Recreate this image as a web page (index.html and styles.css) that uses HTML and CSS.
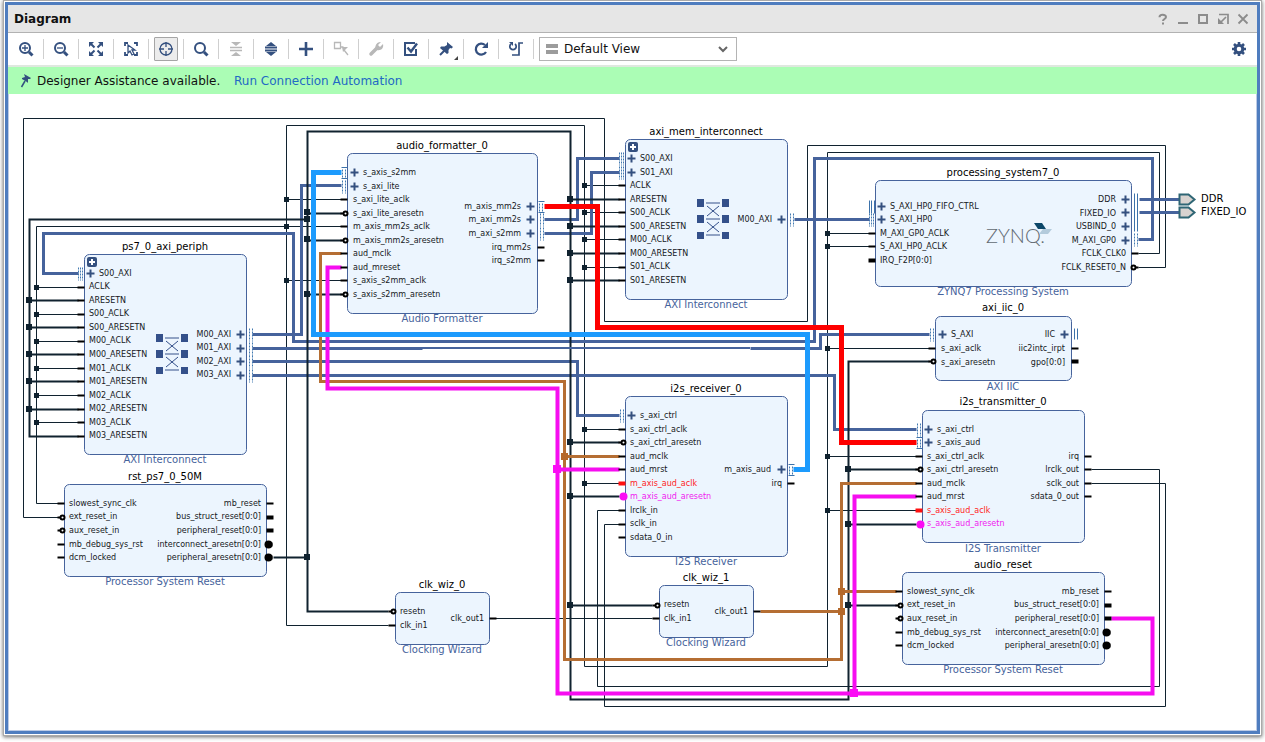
FILE: index.html
```html
<!DOCTYPE html>
<html lang="en">
<head>
<meta charset="utf-8">
<title>Diagram</title>
<link rel="stylesheet" href="styles.css">
</head>
<body>
<div class="window">
<div class="panel">
  <header class="titlebar">
    <h1>Diagram</h1>
    <div class="controls">
      <button type="button" aria-label="Help"><svg viewBox="0 0 12 12"><path d="M2.5 4.2C2.5 1 9 1 9 4c0 2-3 2-3 4" stroke-width="2"/><path d="M5 9.5h2v2H5z" class="solid"/></svg></button>
      <button type="button" aria-label="Minimize"><svg viewBox="0 0 12 12"><path d="M1 10h10" stroke-width="2"/></svg></button>
      <button type="button" aria-label="Maximize"><svg viewBox="0 0 12 12"><path d="M2 2h8v8H2z" stroke-width="2"/></svg></button>
      <button type="button" aria-label="Float"><svg viewBox="0 0 12 12"><path d="M2 1.5h9V11M9 4 4 9" stroke-width="1.7"/><path d="M1 5v6h6z" class="solid"/></svg></button>
      <button type="button" aria-label="Close"><svg viewBox="0 0 12 12"><path d="m1.500 1.500 9 9m0-9-9 9" stroke-width="1.800"/></svg></button>
    </div>
  </header>

  <div class="toolbar" role="toolbar" aria-label="Diagram tools">
    <button type="button" aria-label="Zoom in"><svg viewBox="0 0 16 16"><circle cx="7" cy="7" r="5"/><path d="M4 7h6M7 4v6" class="fine"/><path d="m11 11 3.500 3.500" stroke-width="3"/></svg></button>
    <button type="button" aria-label="Zoom out"><svg viewBox="0 0 16 16"><circle cx="7" cy="7" r="5"/><path d="M4 7h6" class="fine"/><path d="m11 11 3.500 3.500" stroke-width="3"/></svg></button>
    <button type="button" aria-label="Zoom fit"><svg viewBox="0 0 16 16"><path d="m3 3 3.500 3.500M13 3 9.500 6.500M3 13l3.500-3.500M13 13 9.500 9.500"/><path class="solid" d="M1 1h5L1 6zM15 1v5l-5-5zM1 15v-5l5 5zM15 15h-5l5-5z"/></svg></button>
    <button type="button" aria-label="Zoom to selection"><svg viewBox="0 0 16 16"><path d="M2 5V2h3M11 2h3v3M14 11v3h-3M5 14H2v-3" stroke-width="1.800"/><path class="fine" d="M5 4v8l2-2 2 4 2-1-2-4h3z"/></svg></button>
    <button type="button" aria-label="Auto fit selection" aria-pressed="true" class="active"><svg viewBox="0 0 16 16"><circle cx="8" cy="8" r="6" class="fine"/><path d="M8 1v5M8 10v5M1 8h5M10 8h5" class="fine"/></svg></button>
    <button type="button" aria-label="Search"><svg viewBox="0 0 16 16"><circle cx="7" cy="7" r="5"/><path d="m11 11 3.500 3.500" stroke-width="3"/></svg></button>
    <button type="button" aria-label="Collapse all" disabled><svg viewBox="0 0 16 16"><path d="M2 6.500h12M2 9.500h12" stroke-width="1.600"/><path class="solid" d="M3 1h10L8 5zM3 15h10l-5-4z"/></svg></button>
    <button type="button" aria-label="Expand all"><svg viewBox="0 0 16 16"><path d="M2 6.500h12M2 9.500h12" stroke-width="1.900"/><path class="solid" d="M3 5h10L8 1zM3 11h10l-5 4z"/></svg></button>
    <button type="button" aria-label="Add IP"><svg viewBox="0 0 16 16"><path d="M8 1v14M1 8h14" stroke-width="2.600"/></svg></button>
    <button type="button" aria-label="Make connection" disabled><svg viewBox="0 0 16 16"><path d="M1.500 1.500h6v6h-6zM7.500 6h3M11 9l4 5" class="fine"/><path class="solid" d="M9 6h6l-5 5z"/></svg></button>
    <button type="button" aria-label="Customize block" disabled><svg viewBox="0 0 16 16"><path d="m3 13 6-6" stroke-width="3.500" stroke-linecap="round"/><path class="solid" d="M13 1 10 4l2 2 3-3c1 4-2 7-6 6C6 8 7 1 13 1z"/></svg></button>
    <button type="button" aria-label="Validate design"><svg viewBox="0 0 16 16"><path d="M12 2H2v12h11V8"/><path d="m4.500 6.500 3.500 4 6-8" stroke-width="2.400"/></svg></button>
    <button type="button" aria-label="Pin" class="has-menu"><svg viewBox="0 0 16 16"><path d="M7 9 2 14"/><path class="solid" d="m9 1 6 5-1.500 1.500-1.500-.5-1.500 2v3L9 13 2 7l1-1.500h3.500L9 4z"/></svg></button>
    <button type="button" aria-label="Regenerate layout"><svg viewBox="0 0 16 16"><path d="M13 11a5.500 5.500 0 1 1-1-7" stroke-width="2.300"/><path class="solid" d="M15 1v6H9z"/></svg></button>
    <button type="button" aria-label="Optimize routing"><svg viewBox="0 0 16 16"><path d="M3 3a3.200 3.200 0 1 0 4 0M15 2h-4v12H4" stroke-width="1.700"/><path class="solid" d="M1 1h4v4z"/></svg></button>
    <label class="view">
      <svg class="view-bars" viewBox="0 0 12 10"><path d="M0 0h12v4H0zM0 6h12v4H0z"/></svg>
      <select aria-label="View"><option>Default View</option></select>
      <svg class="view-arrow" viewBox="0 0 10 8"><path d="m1 2 4 4 4-4"/></svg>
    </label>
    <button type="button" aria-label="Settings" class="settings"><svg viewBox="0 0 16 16"><circle cx="8" cy="8" r="3.800" stroke-width="3"/><path d="M8 1v2.500M8 12.500V15M1 8h2.500M12.500 8H15M3 3l2 2M11 11l2 2M3 13l2-2M11 5l2-2" stroke-width="2.600"/></svg></button>
  </div>

  <div class="banner">
    <svg class="banner-pin" viewBox="0 0 12 16"><path class="solid" d="m4 1 7 4-1 1-2 0v4L7 9 2 6V5l3-1z"/><path d="M5 8 1.500 14" stroke-width="1.500"/></svg>
    <span>Designer Assistance available.</span>
    <a href="#automation">Run Connection Automation</a>
  </div>

  <main class="canvas">
    <svg class="diagram" role="img" aria-label="Block design">
      <defs>
        <g id="plus"><path class="plus" d="M-4 0H4M0-4V4"/></g>
        <g id="expand"><rect class="chip" width="10" height="10" rx="2"/><path class="chip-plus" d="M2 5h6M5 2v6"/></g>
        <g id="mm"><path class="mesh" d="M-6-6V7M-4-6V7M-2-6V7"/></g>
        <g id="mm2"><path class="mesh" d="M-5-6V7M-2-6V7"/></g>
        <g id="st"><path class="rail" d="M-6-5H0M-6 6H0"/><path class="mesh" d="M-5-3V5M-2-3V5"/></g>
        <g id="bars"><path class="rail" d="M-5-6V7M-3-6V7M0-6V7"/></g>
        <g id="pin"><path class="stub" d="M-7 0H0"/></g>
        <g id="inv"><path class="stub" d="M-7 0H-4"/><circle class="ring" cx="-2" r="2"/></g>
        <g id="bus"><path class="bus" d="M0 0H7"/></g>
        <g id="busn"><path class="bus" d="M0 0H6"/><circle class="dot" cx="2" r="4"/></g>
        <g id="xbar"><path class="cell" d="M0 0h7v8H0zM25 0h7v8h-7zM0 16h7v8H0zM25 16h7v8h-7zM0 33h7v7H0zM25 33h7v7h-7z"/><path class="cross" d="M9 4h14M9 20h14M9 36h14M10 7l12 10M22 7 10 17M10 23l12 10M22 23 10 33"/></g>
        <g id="ext"><path class="ext" d="M0-5H9L15 0 9 5H0z"/></g>
      </defs>
      <g transform="translate(-9 -94)">
      <g transform="translate(.5 .5)">
        <g class="wire clk">
          <path d="M58 517H23V118H604V321H807V145H1165V267H1138"/>
          <path d="M58 503H36V226H341M388 625H286V125H584V666H827V152H1159V253H1138"/>
          <path d="M286 199H341M286 280H341M36 287H78M36 314H78M36 341H78M36 368H78M36 395H78M36 422H78"/>
          <path d="M584 185H619M584 212H619M584 239H619M584 267H619M584 429H619M584 483H619"/>
          <path d="M827 233H869M827 246H869M827 348H929M827 456H916M827 510H916"/>
          <path d="M619 510H597V686H1159V469H1091M619 524H604V706H1165V483H1091M495 618H652"/>
        </g>
        <g class="wire axi">
          <path d="M78 273H43V233H293V341H814V158H1152V239H1138"/>
          <path d="M252 334H301V185H341M252 348H422M750 348H820V334H929"/>
          <path d="M252 361H577V415H619M252 375H834V429H916"/>
          <path d="M544 219H577V158H619M544 233H591V172H619M794 219H869M1139 199H1180M1139 212H1180"/>
        </g>
        <g class="wire rst">
          <path d="M388 611H307V131H570V699H848V361H929M273 557H307M307 219H29V436H78"/>
          <path d="M29 300H78M29 327H78M29 354H78M29 381H78M29 409H78M307 213H341M307 240H341M307 294H341"/>
          <path d="M570 199H619M570 226H619M570 253H619M570 280H619M570 442H619M570 496H619M570 605H652M848 469H916M848 524H916M848 605H896"/>
        </g>
        <g class="wire mclk"><path d="M341 253H320V381H564V659H841V483H916M564 456H619M760 611H841M841 591H896"/></g>
        <g class="wire mrst"><path d="M341 267H327V388H557V693H1152V618H1111M557 469H619M854 693V496H916"/></g>
        <g class="wire mm2s"><path d="M544 206H597V327H841V442H916"/></g>
        <g class="wire s2mm"><path d="M341 172H313V334H807V469H793"/></g>
      </g>
      <path class="axi-thin" d="M422 348H750"/>

      <g class="joint">
        <path d="M284 197h5v5h-5zM284 224h5v5h-5zM284 278h5v5h-5zM34 285h5v5h-5zM34 312h5v5h-5zM34 339h5v5h-5zM34 366h5v5h-5zM34 393h5v5h-5zM34 420h5v5h-5z"/>
        <path d="M582 183h5v5h-5zM582 210h5v5h-5zM582 237h5v5h-5zM582 265h5v5h-5zM582 427h5v5h-5zM582 481h5v5h-5z"/>
        <path d="M825 231h5v5h-5zM825 244h5v5h-5zM825 346h5v5h-5zM825 454h5v5h-5zM825 508h5v5h-5z"/>
        <path d="M304 209h6v6h-6zM304 216h6v6h-6zM304 236h6v6h-6zM304 291h6v6h-6zM304 554h6v6h-6zM26 297h6v6h-6zM26 324h6v6h-6zM26 351h6v6h-6zM26 378h6v6h-6zM26 406h6v6h-6z"/>
        <path d="M567 196h6v6h-6zM567 223h6v6h-6zM567 250h6v6h-6zM567 277h6v6h-6zM567 439h6v6h-6zM567 493h6v6h-6zM567 602h6v6h-6zM845 466h6v6h-6zM845 521h6v6h-6zM845 602h6v6h-6z"/>
      </g>
      <path class="joint-mclk" d="M561 453h7v7h-7zM838 588h7v7h-7zM838 608h7v7h-7z"/>
      <path class="joint-mrst" d="M553 465h8v8h-8zM850 689h8v8h-8z"/>

      <g transform="translate(.5 .5)">
        <g class="block">
          <rect x="84" y="254" width="162" height="200" rx="5"/>
          <rect x="64" y="484" width="202" height="92" rx="5"/>
          <rect x="347" y="153" width="190" height="160" rx="5"/>
          <rect x="625" y="139" width="162" height="160" rx="5"/>
          <rect x="875" y="180" width="256" height="106" rx="5"/>
          <rect x="935" y="316" width="136" height="64" rx="5"/>
          <rect x="625" y="396" width="162" height="160" rx="5"/>
          <rect x="922" y="410" width="162" height="132" rx="5"/>
          <rect x="902" y="572" width="202" height="92" rx="5"/>
          <rect x="395" y="592" width="94" height="52" rx="5"/>
          <rect x="659" y="585" width="94" height="52" rx="5"/>
        </g>

        <!-- ps7_0_axi_periph pins -->
        <use href="#mm" x="84" y="273"/><use href="#plus" x="90" y="273"/>
        <use href="#pin" x="84" y="287"/><use href="#pin" x="84" y="300"/><use href="#pin" x="84" y="314"/><use href="#pin" x="84" y="327"/><use href="#pin" x="84" y="341"/><use href="#pin" x="84" y="354"/><use href="#pin" x="84" y="368"/><use href="#pin" x="84" y="381"/><use href="#pin" x="84" y="395"/><use href="#pin" x="84" y="409"/><use href="#pin" x="84" y="422"/><use href="#pin" x="84" y="436"/>
        <use href="#mm2" x="254" y="334"/><use href="#mm2" x="254" y="348"/><use href="#mm2" x="254" y="361"/><use href="#mm2" x="254" y="375"/>
        <use href="#plus" x="240" y="334"/><use href="#plus" x="240" y="348"/><use href="#plus" x="240" y="361"/><use href="#plus" x="240" y="375"/>
        <!-- rst_ps7_0_50M pins -->
        <use href="#pin" x="64" y="503"/><use href="#inv" x="64" y="517"/><use href="#inv" x="64" y="530"/><use href="#pin" x="64" y="544"/><use href="#pin" x="64" y="557"/>
        <use href="#pin" x="273" y="503"/><use href="#bus" x="266" y="517"/><use href="#bus" x="266" y="530"/><use href="#busn" x="266" y="544"/><use href="#busn" x="266" y="557"/>
        <!-- audio_formatter_0 pins -->
        <use href="#st" x="347" y="172"/><use href="#mm2" x="347" y="186"/><use href="#plus" x="354" y="172"/><use href="#plus" x="354" y="186"/>
        <use href="#pin" x="347" y="199"/><use href="#inv" x="347" y="213"/><use href="#pin" x="347" y="226"/><use href="#inv" x="347" y="240"/><use href="#pin" x="347" y="253"/><use href="#pin" x="347" y="267"/><use href="#pin" x="347" y="280"/><use href="#inv" x="347" y="294"/>
        <use href="#st" x="544" y="206"/><use href="#mm2" x="545" y="219"/><use href="#mm2" x="545" y="233"/><use href="#plus" x="530" y="206"/><use href="#plus" x="530" y="219"/><use href="#plus" x="530" y="233"/>
        <use href="#pin" x="544" y="247"/><use href="#pin" x="544" y="260"/>
        <!-- axi_mem_interconnect pins -->
        <use href="#mm" x="625" y="158"/><use href="#mm" x="625" y="172"/><use href="#plus" x="631" y="158"/><use href="#plus" x="631" y="172"/>
        <use href="#pin" x="625" y="185"/><use href="#pin" x="625" y="199"/><use href="#pin" x="625" y="212"/><use href="#pin" x="625" y="226"/><use href="#pin" x="625" y="239"/><use href="#pin" x="625" y="253"/><use href="#pin" x="625" y="267"/><use href="#pin" x="625" y="280"/>
        <use href="#plus" x="781" y="219"/><use href="#mm2" x="795" y="219"/>
        <!-- processing_system7_0 pins -->
        <use href="#bars" x="874" y="206"/><use href="#mm" x="875" y="219"/><use href="#plus" x="881" y="206"/><use href="#plus" x="881" y="219"/>
        <use href="#pin" x="875" y="233"/><use href="#pin" x="875" y="246"/><path class="bus" d="M868 260H875"/>
        <use href="#plus" x="1125" y="199"/><use href="#plus" x="1125" y="212"/><use href="#plus" x="1125" y="226"/><use href="#plus" x="1125" y="240"/>
        <path class="rail" d="M1134 193V231M1137 193V231"/><use href="#mm2" x="1139" y="239"/><use href="#pin" x="1138" y="253"/>
        <path class="stub" d="M1135 267H1138"/><circle class="ring" cx="1133" cy="267" r="2"/>
        <!-- axi_iic_0 pins -->
        <use href="#mm2" x="935" y="334"/><use href="#plus" x="942" y="334"/><use href="#pin" x="935" y="348"/><use href="#inv" x="935" y="361"/>
        <use href="#plus" x="1064" y="334"/><path class="rail" d="M1074 328V339M1077 328V339"/><use href="#pin" x="1078" y="348"/><use href="#bus" x="1071" y="361"/>
        <!-- i2s_receiver_0 pins -->
        <use href="#mm2" x="625" y="415"/><use href="#plus" x="631" y="415"/><use href="#pin" x="625" y="429"/><use href="#inv" x="625" y="442"/><use href="#pin" x="625" y="456"/><use href="#pin" x="625" y="469"/>
        <path class="stub-clk" d="M618 483H625"/><circle class="dot-rst" cx="623" cy="496" r="4"/><use href="#pin" x="625" y="510"/><use href="#pin" x="625" y="524"/><use href="#pin" x="625" y="537"/>
        <use href="#plus" x="781" y="469"/><use href="#st" x="794" y="469"/><use href="#pin" x="794" y="483"/>
        <!-- i2s_transmitter_0 pins -->
        <use href="#mm2" x="922" y="429"/><use href="#st" x="922" y="442"/><use href="#plus" x="928" y="429"/><use href="#plus" x="928" y="442"/>
        <use href="#pin" x="922" y="456"/><use href="#inv" x="922" y="469"/><use href="#pin" x="922" y="483"/><use href="#pin" x="922" y="496"/><path class="stub-clk" d="M915 510H922"/><circle class="dot-rst" cx="920" cy="524" r="4"/>
        <use href="#pin" x="1091" y="456"/><use href="#pin" x="1091" y="469"/><use href="#pin" x="1091" y="483"/><use href="#pin" x="1091" y="496"/>
        <!-- audio_reset pins -->
        <use href="#pin" x="902" y="591"/><use href="#inv" x="902" y="605"/><use href="#inv" x="902" y="618"/><use href="#pin" x="902" y="632"/><use href="#pin" x="902" y="645"/>
        <use href="#pin" x="1111" y="591"/><use href="#bus" x="1104" y="605"/><use href="#bus" x="1104" y="618"/><use href="#busn" x="1104" y="632"/><use href="#busn" x="1104" y="645"/>
        <!-- clocking wizard pins -->
        <use href="#inv" x="395" y="611"/><use href="#pin" x="395" y="625"/><use href="#pin" x="496" y="618"/>
        <use href="#inv" x="659" y="605"/><use href="#pin" x="659" y="618"/><use href="#pin" x="760" y="611"/>
        <use href="#ext" x="1179" y="199"/><use href="#ext" x="1179" y="212"/>
      </g>
      <use href="#expand" x="87" y="257"/><use href="#expand" x="628" y="142"/>
      <use href="#xbar" x="156" y="334"/><use href="#xbar" x="697" y="199"/>

      <text class="zynq" x="986" y="243">ZYNQ.</text>
      <path class="zynq-dark" d="M1034 223h8l4 6h-8z"/><path class="zynq-light" d="M1043 229h9l-4 5h-9z"/>

      <g class="name">
        <text x="165" y="250">ps7_0_axi_periph</text><text x="165" y="480">rst_ps7_0_50M</text><text x="442" y="149">audio_formatter_0</text><text x="706" y="135">axi_mem_interconnect</text><text x="1003" y="176">processing_system7_0</text><text x="1003" y="311">axi_iic_0</text><text x="706" y="392">i2s_receiver_0</text><text x="1003" y="405">i2s_transmitter_0</text><text x="1003" y="568">audio_reset</text><text x="442" y="588">clk_wiz_0</text><text x="706" y="581">clk_wiz_1</text>
      </g>
      <g class="kind">
        <text x="165" y="463">AXI Interconnect</text><text x="165" y="585">Processor System Reset</text><text x="442" y="322">Audio Formatter</text><text x="706" y="308">AXI Interconnect</text><text x="1003" y="295">ZYNQ7 Processing System</text><text x="1003" y="390">AXI IIC</text><text x="706" y="565">I2S Receiver</text><text x="1003" y="552">I2S Transmitter</text><text x="1003" y="673">Processor System Reset</text><text x="442" y="653">Clocking Wizard</text><text x="706" y="646">Clocking Wizard</text>
      </g>
      <g class="external"><text x="1201" y="202">DDR</text><text x="1201" y="215">FIXED_IO</text></g>
      <g class="in">
        <text x="99" y="276">S00_AXI</text><text x="89" y="289">ACLK</text><text x="89" y="303">ARESETN</text><text x="89" y="316">S00_ACLK</text><text x="89" y="330">S00_ARESETN</text><text x="89" y="343">M00_ACLK</text><text x="89" y="357">M00_ARESETN</text><text x="89" y="371">M01_ACLK</text><text x="89" y="384">M01_ARESETN</text><text x="89" y="398">M02_ACLK</text><text x="89" y="411">M02_ARESETN</text><text x="89" y="425">M03_ACLK</text><text x="89" y="438">M03_ARESETN</text>
        <text x="69" y="506">slowest_sync_clk</text><text x="69" y="519">ext_reset_in</text><text x="69" y="533">aux_reset_in</text><text x="69" y="547">mb_debug_sys_rst</text><text x="69" y="560">dcm_locked</text>
        <text x="363" y="175">s_axis_s2mm</text><text x="363" y="189">s_axi_lite</text><text x="353" y="202">s_axi_lite_aclk</text><text x="353" y="216">s_axi_lite_aresetn</text><text x="353" y="229">m_axis_mm2s_aclk</text><text x="353" y="243">m_axis_mm2s_aresetn</text><text x="353" y="256">aud_mclk</text><text x="353" y="270">aud_mreset</text><text x="353" y="283">s_axis_s2mm_aclk</text><text x="353" y="297">s_axis_s2mm_aresetn</text>
        <text x="640" y="161">S00_AXI</text><text x="640" y="175">S01_AXI</text><text x="630" y="188">ACLK</text><text x="630" y="202">ARESETN</text><text x="630" y="215">S00_ACLK</text><text x="630" y="229">S00_ARESETN</text><text x="630" y="242">M00_ACLK</text><text x="630" y="256">M00_ARESETN</text><text x="630" y="269">S01_ACLK</text><text x="630" y="283">S01_ARESETN</text>
        <text x="890" y="209">S_AXI_HP0_FIFO_CTRL</text><text x="890" y="222">S_AXI_HP0</text><text x="880" y="236">M_AXI_GP0_ACLK</text><text x="880" y="249">S_AXI_HP0_ACLK</text><text x="880" y="263">IRQ_F2P[0:0]</text>
        <text x="951" y="337">S_AXI</text><text x="941" y="351">s_axi_aclk</text><text x="941" y="365">s_axi_aresetn</text>
        <text x="640" y="418">s_axi_ctrl</text><text x="630" y="432">s_axi_ctrl_aclk</text><text x="630" y="445">s_axi_ctrl_aresetn</text><text x="630" y="459">aud_mclk</text><text x="630" y="472">aud_mrst</text><text x="630" y="486" class="hot">m_axis_aud_aclk</text><text x="630" y="499" class="pink">m_axis_aud_aresetn</text><text x="630" y="513">lrclk_in</text><text x="630" y="526">sclk_in</text><text x="630" y="540">sdata_0_in</text>
        <text x="937" y="432">s_axi_ctrl</text><text x="937" y="445">s_axis_aud</text><text x="927" y="459">s_axi_ctrl_aclk</text><text x="927" y="472">s_axi_ctrl_aresetn</text><text x="927" y="486">aud_mclk</text><text x="927" y="499">aud_mrst</text><text x="927" y="513" class="hot">s_axis_aud_aclk</text><text x="927" y="526" class="pink">s_axis_aud_aresetn</text>
        <text x="907" y="594">slowest_sync_clk</text><text x="907" y="607">ext_reset_in</text><text x="907" y="621">aux_reset_in</text><text x="907" y="635">mb_debug_sys_rst</text><text x="907" y="648">dcm_locked</text>
        <text x="400" y="614">resetn</text><text x="400" y="628">clk_in1</text><text x="664" y="607">resetn</text><text x="664" y="621">clk_in1</text>
      </g>
      <g class="out">
        <text x="231" y="337">M00_AXI</text><text x="231" y="350">M01_AXI</text><text x="231" y="364">M02_AXI</text><text x="231" y="377">M03_AXI</text>
        <text x="261" y="506">mb_reset</text><text x="261" y="519">bus_struct_reset[0:0]</text><text x="261" y="533">peripheral_reset[0:0]</text><text x="261" y="547">interconnect_aresetn[0:0]</text><text x="261" y="560">peripheral_aresetn[0:0]</text>
        <text x="521" y="209">m_axis_mm2s</text><text x="521" y="222">m_axi_mm2s</text><text x="521" y="236">m_axi_s2mm</text><text x="531" y="250">irq_mm2s</text><text x="531" y="263">irq_s2mm</text>
        <text x="772" y="222">M00_AXI</text>
        <text x="1116" y="202">DDR</text><text x="1116" y="216">FIXED_IO</text><text x="1116" y="229">USBIND_0</text><text x="1116" y="243">M_AXI_GP0</text><text x="1126" y="256">FCLK_CLK0</text><text x="1126" y="270">FCLK_RESET0_N</text>
        <text x="1055" y="337">IIC</text><text x="1065" y="351">iic2intc_irpt</text><text x="1065" y="365">gpo[0:0]</text>
        <text x="771" y="472">m_axis_aud</text><text x="782" y="486">irq</text>
        <text x="1079" y="459">irq</text><text x="1079" y="472">lrclk_out</text><text x="1079" y="486">sclk_out</text><text x="1079" y="499">sdata_0_out</text>
        <text x="1099" y="594">mb_reset</text><text x="1099" y="607">bus_struct_reset[0:0]</text><text x="1099" y="621">peripheral_reset[0:0]</text><text x="1099" y="635">interconnect_aresetn[0:0]</text><text x="1099" y="648">peripheral_aresetn[0:0]</text>
        <text x="484" y="621">clk_out1</text><text x="748" y="614">clk_out1</text>
      </g>
      </g>
    </svg>
  </main>
</div>
</div>
</body>
</html>
```
FILE: styles.css
```css
* { box-sizing: border-box; }

body {
  margin: 0;
  height: 100vh;
  padding: 0 3px 6px;
  background: #fff;
  color: #111;
  font: 12px "DejaVu Sans", sans-serif;
}

.window {
  height: 100%;
  padding: 1px;
  border: 1px solid #aaa;
  background: #fff;
  box-shadow: 0 1px 4px rgba(0, 0, 0, .6);
}

.panel {
  display: flex;
  flex-direction: column;
  height: 100%;
  border: 3px solid #4f7dbf;
}

.titlebar {
  display: flex;
  align-items: center;
  justify-content: space-between;
  height: 28px;
  padding: 0 4px 0 6px;
  border-bottom: 1px solid #b2b2b2;
  background: #e6e6e6;
}

h1 { margin: 0; font-size: 12px; }

button {
  display: grid;
  place-items: center;
  padding: 0;
  border: 1px solid transparent;
  background: none;
}

svg { fill: none; stroke: none; }

.controls { display: flex; }
.controls button { width: 20px; height: 20px; color: #8c8c8c; }
.controls svg { width: 12px; height: 12px; stroke: currentColor; }

.solid { fill: currentColor; stroke: none; }
.fine { stroke-width: 1.3; }

.toolbar {
  display: flex;
  align-items: center;
  height: 34px;
  padding: 0 6px;
  border-bottom: 2px solid #dfe8df;
}

.toolbar button { position: relative; width: 24px; height: 24px; color: #34507f; }
.toolbar button svg { width: 16px; height: 16px; stroke: currentColor; stroke-width: 2; }
.toolbar button:not(.settings) { margin-right: 11px; }
.toolbar button:not(.settings)::after {
  content: "";
  position: absolute;
  top: 1px;
  right: -7px;
  width: 1px;
  height: 20px;
  background: #cfcfcf;
}
.toolbar button:disabled { color: #b8b8b8; }
.toolbar .active { border-color: #a5a5a5; border-radius: 1px; background: #ececec; }
.has-menu::before {
  content: "";
  position: absolute;
  right: -1px;
  bottom: 0;
  border: 2px solid #444;
  border-top-color: transparent;
  border-left-color: transparent;
}

.view { display: flex; align-items: center; position: relative; width: 198px; height: 24px; }
.view select {
  width: 100%;
  height: 100%;
  padding: 0 24px;
  border: 1px solid #b4b4b4;
  border-radius: 0;
  background: #fff;
  color: #111;
  font: inherit;
  appearance: none;
}
.view svg { position: absolute; pointer-events: none; }
.view-bars { left: 7px; width: 12px; height: 10px; fill: #9c9c9c; }
.view-arrow { right: 9px; width: 10px; height: 8px; stroke: #666; stroke-width: 2; }
.settings { margin-left: auto; }

.banner {
  display: flex;
  align-items: center;
  gap: 5px;
  height: 27px;
  padding-left: 12px;
  background: #abfdb5;
}
.banner span { width: 192px; }
.banner a { color: #2269c4; text-decoration: none; }
.banner-pin { width: 12px; height: 16px; color: #34507f; stroke: currentColor; }

.canvas {
  flex: 1;
  min-height: 0;
  overflow: hidden;
  border: 1px solid #bccbe6;
  border-top: 0;
}
.diagram { display: block; width: 100%; height: 100%; }

.clk { stroke: #10222f; stroke-width: 1; }
.rst { stroke: #10222f; stroke-width: 2; }
.axi { stroke: #46639c; stroke-width: 3; }
.axi-thin { stroke: #46639c; stroke-width: 2; }
.mclk { stroke: #b56e33; stroke-width: 3; }
.mrst { stroke: #f60df0; stroke-width: 4; }
.mm2s { stroke: #fe0000; stroke-width: 5; }
.s2mm { stroke: #1d9bfd; stroke-width: 5; }
.joint { fill: #10222f; }
.joint-mclk { fill: #b5692b; }
.joint-mrst { fill: #fb0bf5; }

.block { fill: #ecf5fe; stroke: #46639c; }
.plus { stroke: #34507f; stroke-width: 2; }
.chip { fill: #34507f; }
.chip-plus { stroke: #fff; stroke-width: 2; }
.mesh { stroke: #4179b0; stroke-dasharray: 2 1; }
.rail { stroke: #3c72aa; }
.stub { stroke: #000; stroke-width: 2; }
.ring { fill: #fff; stroke: #000; stroke-width: 2; }
.bus { stroke: #000; stroke-width: 4; }
.dot { fill: #000; }
.stub-clk { stroke: #f11; stroke-width: 4; }
.dot-rst { fill: #fb0bf5; }
.cell { fill: #34508a; }
.cross { stroke: #34508a; stroke-width: 1; }
.ext { fill: #d8d3d0; stroke: #2f6675; stroke-width: 2; }

.zynq { fill: #626a72; font: 300 20px Lato, sans-serif; }
.zynq-dark { fill: #0c4769; }
.zynq-light { fill: #b3cbdc; }

.name, .kind, .external { font-size: 10px; }
.name, .kind { text-anchor: middle; }
.name, .external { fill: #000; }
.kind { fill: #46639c; }
.in, .out { fill: #15181c; font-size: 8px; }
.out { text-anchor: end; }
.hot { fill: #f22; }
.pink { fill: #f01af0; }
```
